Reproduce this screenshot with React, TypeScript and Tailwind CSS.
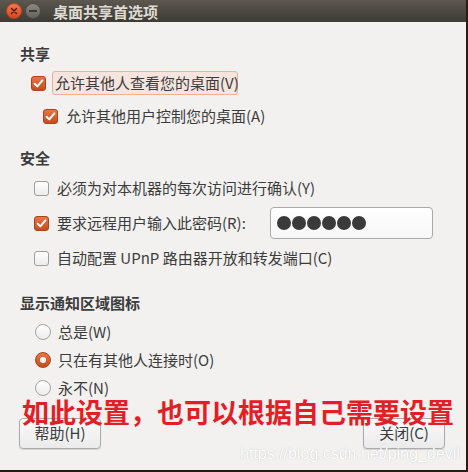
import React from "react";

const FONT = { fontFamily: '"Noto Sans CJK SC", "Noto Sans", sans-serif' };

function Check({ on }: { on: boolean }) {
  if (!on) {
    return (
      <span className="block w-[15px] h-[15px] shrink-0 rounded-[3px] border border-[#9e9e9e] bg-gradient-to-b from-[#ffffff] to-[#ececec]" />
    );
  }
  return (
    <span className="flex items-center justify-center w-[15px] h-[15px] shrink-0 rounded-[3px] border border-[#a8451d] bg-gradient-to-b from-[#ea7443] to-[#c64c1d]">
      <svg width="11" height="11" viewBox="0 0 11 11">
        <path d="M1.6 5.8 L4.3 8.4 L9.4 2.4" fill="none" stroke="#fff" strokeWidth="2" strokeLinecap="round" strokeLinejoin="round" />
      </svg>
    </span>
  );
}

function Radio({ on }: { on: boolean }) {
  if (!on) {
    return (
      <span className="block w-[16px] h-[16px] shrink-0 rounded-full border border-[#a3a3a3] bg-gradient-to-b from-[#ffffff] to-[#ececec]" />
    );
  }
  return (
    <span className="flex items-center justify-center w-[16px] h-[16px] shrink-0 rounded-full border border-[#a8451d] bg-gradient-to-b from-[#ea7443] to-[#c64c1d]">
      <span className="block w-[6px] h-[6px] rounded-full bg-white" />
    </span>
  );
}

function Heading({ children, mt }: { children: React.ReactNode; mt: string }) {
  return (
    <div className={`${mt} h-[20px] leading-[20px] pl-[20px] text-[15px] font-bold text-[#3c3c3c]`}>
      {children}
    </div>
  );
}

export default function App() {
  return (
    <div className="w-[468px] h-[472px] bg-[#2d1b16] overflow-hidden" style={FONT}>
      <div className="relative w-[466px] h-[470px] bg-[#f2f1f0] text-[#3c3c3c]">
        {/* 标题栏 */}
        <div className="h-[22px] flex items-center bg-gradient-to-b from-[#5c5850] to-[#3d3b35]">
          <span className="ml-[6px] flex items-center justify-center w-[16px] h-[16px] rounded-full bg-gradient-to-b from-[#f4784a] to-[#d9461c] border border-[#b9441f]">
            <svg width="8" height="8" viewBox="0 0 8 8">
              <path d="M1.5 1.5 L6.5 6.5 M6.5 1.5 L1.5 6.5" stroke="#4a1a0c" strokeWidth="1.4" strokeLinecap="round" />
            </svg>
          </span>
          <span className="ml-[3px] flex items-center justify-center w-[16px] h-[16px] rounded-full bg-gradient-to-b from-[#8b8882] to-[#67645e] border border-[#4e4c47]">
            <span className="block w-[8px] h-[1.5px] bg-[#3a3934]" />
          </span>
          <span className="ml-[12px] text-[15px] font-bold text-[#dfdbd2] leading-none">桌面共享首选项</span>
        </div>

        <Heading mt="mt-[22px]">共享</Heading>

        <div className="mt-[7px] h-[24px] flex items-center pl-[31px]">
          <Check on />
          <span className="ml-[6px] h-[24px] w-[186px] flex items-center pl-[2px] rounded-[3px] border border-[#e9b39b] bg-[#f6e5de] text-[15px] whitespace-nowrap">
            允许其他人查看您的桌面(V)
          </span>
        </div>

        <div className="mt-[9px] h-[24px] flex items-center pl-[43px]">
          <Check on />
          <span className="ml-[8px] text-[15px] whitespace-nowrap">允许其他用户控制您的桌面(A)</span>
        </div>

        <Heading mt="mt-[20px]">安全</Heading>

        <div className="mt-[8px] h-[24px] flex items-center pl-[34px]">
          <Check on={false} />
          <span className="ml-[8px] text-[15px] whitespace-nowrap">必须为对本机器的每次访问进行确认(Y)</span>
        </div>

        <div className="mt-[7px] h-[32px] flex items-center pl-[34px]">
          <Check on />
          <span className="ml-[8px] w-[213px] text-[15px] whitespace-nowrap">要求远程用户输入此密码(R):</span>
          <div className="w-[163px] h-[32px] flex items-center pl-[6px] rounded-[4px] border border-[#a9a9a9] bg-gradient-to-b from-[#ffffff] to-[#f7f7f7]">
            {[0, 1, 2, 3, 4, 5].map((i) => (
              <span key={i} className="block w-[14px] h-[14px] mr-[1px] rounded-full bg-[#3a3a3a]" />
            ))}
          </div>
        </div>

        <div className="mt-[7px] h-[24px] flex items-center pl-[34px]">
          <Check on={false} />
          <span className="ml-[8px] text-[15px] whitespace-nowrap">自动配置 UPnP 路由器开放和转发端口(C)</span>
        </div>

        <Heading mt="mt-[23px]">显示通知区域图标</Heading>

        <div className="mt-[5px] flex flex-col pl-[35px]">
          {[
            ["总是(W)", false],
            ["只在有其他人连接时(O)", true],
            ["永不(N)", false],
          ].map(([label, on]) => (
            <div key={label as string} className="h-[28px] flex items-center">
              <Radio on={on as boolean} />
              <span className="ml-[7px] text-[15px] whitespace-nowrap">{label}</span>
            </div>
          ))}
        </div>

        <div className="mt-[16px] flex justify-between pl-[19px] pr-[21px]">
          <button className="w-[82px] h-[31px] rounded-[4px] border border-[#ababab] bg-gradient-to-b from-[#fafafa] to-[#ebebeb] shadow-[0_1px_1px_rgba(0,0,0,0.12)] text-[15px] text-[#3c3c3c]">
            帮助(H)
          </button>
          <button className="w-[82px] h-[31px] rounded-[4px] border border-[#ababab] bg-gradient-to-b from-[#fafafa] to-[#ebebeb] shadow-[0_1px_1px_rgba(0,0,0,0.12)] text-[15px] text-[#3c3c3c]">
            关闭(C)
          </button>
        </div>

        {/* 红字标注 */}
        <div className="absolute left-[22px] top-[398px] text-[27px] leading-[28px] font-bold text-[#e41e27] whitespace-nowrap">
          如此设置，也可以根据自己需要设置
        </div>

        {/* 水印 */}
        <div
          className="absolute left-[240px] top-[444px] text-[16px] leading-[20px] text-white whitespace-nowrap [text-shadow:0_0_1px_#b5b5b5]"
          style={{ fontFamily: '"Liberation Sans", Arial, sans-serif' }}
        >
          https://blog.csdn.net/ping_devil
        </div>
      </div>
    </div>
  );
}
